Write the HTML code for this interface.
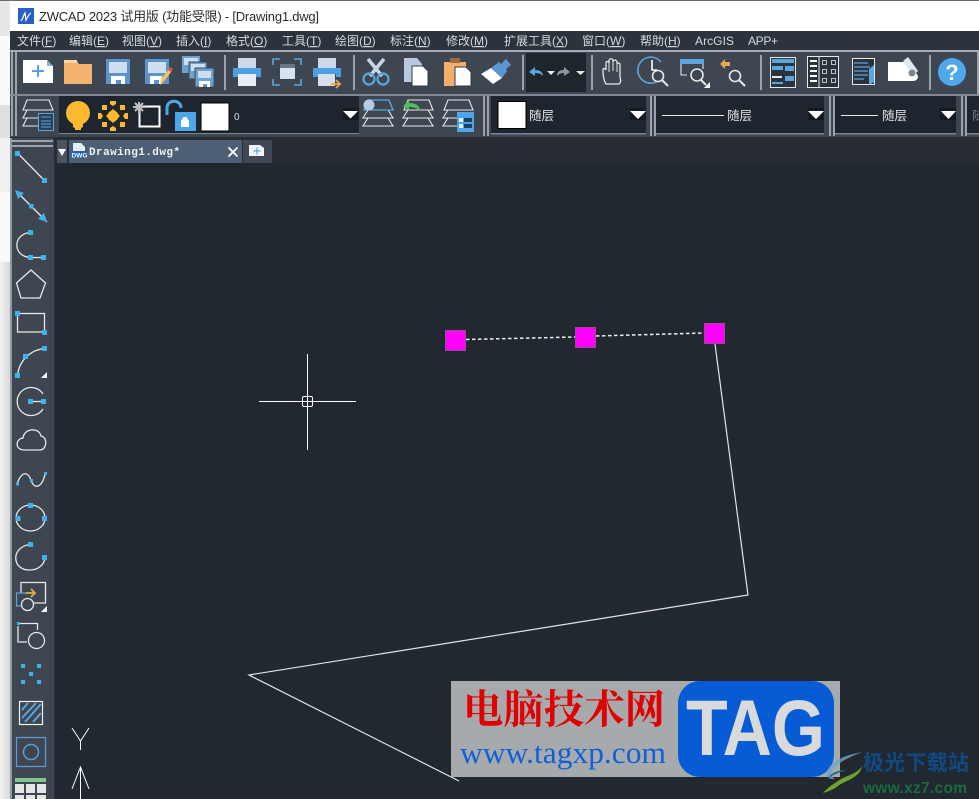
<!DOCTYPE html>
<html><head><meta charset="utf-8"><style>
html,body{margin:0;padding:0;background:#212830;overflow:hidden}
svg{display:block}
text{font-family:"Liberation Sans","Noto Sans CJK SC",sans-serif}
.m{font-size:12px;fill:#d6dade}
.u{text-decoration:underline}
.w{fill:none;stroke:#e8e8e8;stroke-width:1.3}
.b{fill:#3fb4ea}
.l{fill:#e9edf2}
.g{fill:#9aa3ad}
</style></head><body>
<svg width="979" height="799" viewBox="0 0 979 799" xmlns="http://www.w3.org/2000/svg">
<defs>
<linearGradient id="st" x1="0" x2="1" y1="0" y2="0"><stop offset="0" stop-color="#f2f2f2"/><stop offset="1" stop-color="#d8d8d8"/></linearGradient>
</defs>
<rect width="979" height="799" fill="#212830"/>
<!-- left window strip -->
<rect x="0" y="0" width="10" height="36" fill="#e7e7e7"/>
<rect x="0" y="36" width="10" height="69" fill="#fafafa"/>
<rect x="0" y="105" width="10" height="33" fill="#dfdfdf"/>
<rect x="0" y="138" width="10" height="54" fill="#f0f0f0"/>
<rect x="0" y="192" width="10" height="70" fill="#fafafa"/>
<rect x="0" y="262" width="10" height="537" fill="url(#st)"/>
<!-- title -->
<rect x="10" y="0" width="969" height="31" fill="#fff"/>
<rect x="0" y="0" width="979" height="1" fill="#6a6a6a"/>
<rect x="18" y="8" width="16" height="16" fill="#2a5fc6"/>
<path d="M21 21c2-2 2-5 4-8l1 7c1-2 3-6 5-7" fill="none" stroke="#fff" stroke-width="1.2"/>
<text x="39" y="21" font-size="13" fill="#2a2a2a" textLength="280" lengthAdjust="spacing">ZWCAD 2023 试用版 (功能受限) - [Drawing1.dwg]</text>
<!-- menu -->
<rect x="10" y="31" width="969" height="19" fill="#2b333d"/>
<text class="m" x="17" y="45">文件(<tspan class="u">F</tspan>)</text>
<text class="m" x="69" y="45">编辑(<tspan class="u">E</tspan>)</text>
<text class="m" x="122" y="45">视图(<tspan class="u">V</tspan>)</text>
<text class="m" x="176" y="45">插入(<tspan class="u">I</tspan>)</text>
<text class="m" x="226" y="45">格式(<tspan class="u">O</tspan>)</text>
<text class="m" x="282" y="45">工具(<tspan class="u">T</tspan>)</text>
<text class="m" x="335" y="45">绘图(<tspan class="u">D</tspan>)</text>
<text class="m" x="390" y="45">标注(<tspan class="u">N</tspan>)</text>
<text class="m" x="446" y="45">修改(<tspan class="u">M</tspan>)</text>
<text class="m" x="504" y="45">扩展工具(<tspan class="u">X</tspan>)</text>
<text class="m" x="582" y="45">窗口(<tspan class="u">W</tspan>)</text>
<text class="m" x="640" y="45">帮助(<tspan class="u">H</tspan>)</text>
<text class="m" x="695" y="45" textLength="39">ArcGIS</text>
<text class="m" x="748" y="45" textLength="30">APP+</text>
<!-- toolbars bg -->
<rect x="10" y="50" width="969" height="2" fill="#a5adb6"/>
<rect x="10" y="52" width="969" height="42" fill="#3d4651"/>
<rect x="10" y="94" width="969" height="2" fill="#7f8995"/>
<rect x="10" y="96" width="969" height="41" fill="#3d4651"/>
<rect x="10" y="137" width="969" height="26" fill="#272c33"/>
<!-- grips toolbar 1 -->
<rect x="11" y="52" width="2" height="42" class="g"/><rect x="15" y="52" width="2" height="42" class="g"/>
<rect x="224" y="55" width="2" height="35" class="g"/>
<rect x="353" y="55" width="2" height="35" class="g"/>
<rect x="522" y="55" width="2" height="35" class="g"/>
<rect x="591" y="55" width="2" height="35" class="g"/>
<rect x="760" y="55" width="2" height="35" class="g"/>
<rect x="929" y="55" width="2" height="35" class="g"/>
<rect x="977" y="52" width="2" height="42" class="g"/>
<!-- new -->
<path d="M23 60h24l6 6v17H23z" fill="#fff"/><path d="M47 60l6 6h-6z" fill="#7fb1dd"/>
<path d="M38 65v12M32 71h12" stroke="#55a2e0" stroke-width="2"/>
<!-- open -->
<path d="M64 60h12l3 4h13v20H64z" fill="#f5b26e"/><rect x="64" y="60" width="13" height="3" fill="#fbd7a6"/>
<!-- save -->
<rect x="106" y="59" width="24" height="25" fill="#5c93cc"/><rect x="109" y="62" width="18" height="11" fill="#cfdff0"/><path d="M111 84v-8h14v8h-4v-4h-5v4z" fill="#fff"/>
<!-- save as -->
<rect x="145" y="59" width="24" height="25" fill="#5c93cc"/><rect x="148" y="62" width="18" height="11" fill="#cfdff0"/><path d="M150 84v-8h12v8h-3v-4h-5v4z" fill="#fff"/>
<path d="M160 85l1-6 8-10 3 2-8 10z" fill="#f6c35b"/><path d="M168 70l2-3 3 2-2 3z" fill="#e24f4f"/>
<!-- save all -->
<rect x="182" y="56" width="18" height="17" fill="#6ea2d6"/><rect x="184" y="58" width="14" height="7" fill="#cfdff0"/>
<rect x="189" y="62" width="18" height="17" fill="#6ea2d6" stroke="#3d4651"/><rect x="191" y="64" width="14" height="7" fill="#cfdff0"/>
<rect x="195" y="68" width="19" height="19" fill="#6ea2d6" stroke="#3d4651"/><rect x="198" y="71" width="13" height="7" fill="#cfdff0"/><path d="M199 87v-6h11v6h-3v-3h-4v3z" fill="#fff"/>
<!-- print -->
<rect x="238" y="58" width="18" height="10" fill="#cdd8e8"/><path d="M233 68h28v9h-5v-3h-18v3h-5z" fill="#4c9fe3"/><rect x="238" y="74" width="18" height="12" fill="#e8edf5"/>
<!-- preview -->
<path d="M273 65v-6h7M294 59h7v6M301 79v6h-7M280 85h-7v-6" fill="none" stroke="#5ca5e0" stroke-width="1.6"/>
<rect x="280" y="64" width="15" height="15" fill="#d9e2ef"/><rect x="280" y="64" width="15" height="4" fill="#6a7380"/>
<!-- publish -->
<rect x="318" y="58" width="18" height="10" fill="#cdd8e8"/><path d="M313 68h28v9h-5v-3h-18v3h-5z" fill="#4c9fe3"/><rect x="318" y="74" width="17" height="12" fill="#d8dfea"/>
<path d="M331 84h8M336 80l4 4-4 4" fill="none" stroke="#e5ab45" stroke-width="1.8"/>
<!-- cut -->
<path d="M368 59l14 17M384 59l-14 17" stroke="#cbd6e6" stroke-width="3.5"/>
<circle cx="369" cy="79" r="5.5" fill="none" stroke="#5ca5e0" stroke-width="2.2"/><circle cx="383" cy="79" r="5.5" fill="none" stroke="#5ca5e0" stroke-width="2.2"/>
<!-- copy -->
<path d="M404 58h13l5 6v18h-18z" fill="#b8c8de"/>
<path d="M412 66h11l5 5v15h-16z" fill="#fff" stroke="#323a44"/>
<!-- paste -->
<rect x="444" y="62" width="22" height="24" fill="#f4b06a"/><rect x="450" y="58" width="10" height="5" fill="#9f6b38"/>
<path d="M455 67h11l5 5v14h-16z" fill="#fff" stroke="#323a44"/>
<!-- brush -->
<path d="M481 74l10-6 11 10-9 6z" fill="#fff"/><path d="M491 68l8-6 2 2 5-5 5 6-5 4 1 2-5 7z" fill="#5a97d2"/>
<!-- undo/redo -->
<rect x="526" y="53" width="60" height="39" fill="#1f252d"/>
<path d="M529 72l6-5v3c5 0 8 2 8 6-2-2-4-3-8-3v3z" fill="#5ca5e0"/>
<path d="M547 71h8l-4 4z" fill="#e8e8e8"/>
<path d="M570 72l-6-5v3c-5 0-7 2-7 6 2-2 4-3 7-3v3z" fill="#8d959f"/>
<path d="M576 71h9l-4.500 4z" fill="#e8e8e8"/>
<!-- hand -->
<path d="M606 84c-2-3-3-8-3-14 0-2 2-2 3 0v-7c0-2 3-2 3 0v-2c0-3 4-3 4 0v1c0-3 4-2 4 0v2c1-2 3-1 3 1v12c1 4 1 5-1 7z" fill="none" stroke="#e8e8e8" stroke-width="1.3"/>
<path d="M609 62v10M613 60v11M617 62v10" stroke="#e8e8e8" stroke-width="1"/>
<!-- zoom realtime -->
<path d="M661 62a13 13 0 1 0-3 19" fill="none" stroke="#5ca5e0" stroke-width="1.6"/>
<path d="M652 60v10h5" fill="none" stroke="#fff" stroke-width="1.6"/>
<circle cx="658" cy="76" r="5.500" fill="#3d4651" stroke="#e8e8e8" stroke-width="1.600"/><path d="M662 80l6 6" stroke="#e8e8e8" stroke-width="2"/>
<!-- zoom window -->
<rect x="680" y="59" width="24" height="5" fill="#5ca5e0"/>
<path d="M681 64v11h6M703 64v5" fill="none" stroke="#e8e8e8" stroke-width="1.100"/>
<circle cx="697" cy="75" r="6" fill="#3d4651" stroke="#e8e8e8" stroke-width="1.600"/><path d="M701 80l5 5" stroke="#e8e8e8" stroke-width="2"/>
<path d="M710 82v6h-6z" fill="#fff"/>
<!-- zoom previous -->
<path d="M720 64l5-5v3h5v4h-5v3z" fill="#e5ab45"/>
<circle cx="735" cy="76" r="5.500" fill="#3d4651" stroke="#e8e8e8" stroke-width="1.600"/><path d="M739 80l6 6" stroke="#e8e8e8" stroke-width="2"/>
<!-- properties -->
<rect x="770.500" y="57.500" width="25" height="30" fill="#2b333d" stroke="#e8e8e8"/>
<rect x="772" y="59" width="22" height="4" fill="#5ca5e0"/><rect x="772" y="66" width="11" height="4" fill="#5ca5e0"/><rect x="785" y="66" width="9" height="5" fill="#5ca5e0"/>
<rect x="772" y="76" width="10" height="2" fill="#e8e8e8"/><rect x="785" y="76" width="9" height="5" fill="#5ca5e0"/><rect x="772" y="82" width="11" height="2" fill="#5ca5e0"/>
<!-- design center -->
<rect x="807.500" y="56.500" width="31" height="31" fill="#2b333d" stroke="#e8e8e8"/><path d="M819 57v30" stroke="#e8e8e8"/>
<path d="M810 60h7v2h-7zM810 65h7v2h-7zM810 70h7v2h-7zM810 75h7v2h-7zM810 80h7v2h-7z" fill="#fff"/>
<path d="M822.500 60.500h4v4h-4zM831.500 60.500h4v4h-4zM822.500 69.500h4v4h-4zM831.500 69.500h4v4h-4zM822.500 78.500h4v4h-4zM831.500 78.500h4v4h-4z" fill="none" stroke="#b8c0ca"/>
<!-- doc -->
<path d="M852.500 58.500h22v26h-22z" fill="#2b333d" stroke="#e8e8e8"/>
<path d="M854 63h14M854 67h16M854 71h14M854 75h14M854 79h10" stroke="#5ca5e0" stroke-width="1.200"/>
<path d="M869 69l5-4v17l-5 3z" fill="#5ca5e0"/>
<!-- roll -->
<path d="M888 62h21l9 14c0 3-2 5-5 5h-25z" fill="#fff"/>
<path d="M903 61l5-4 10 14-5 5z" fill="#e0e6ee"/><circle cx="912" cy="73" r="3.500" fill="#7d8793"/>
<!-- help -->
<circle cx="952" cy="72" r="14" fill="#4fa8ea"/>
<text x="952" y="80" font-size="22" font-weight="bold" fill="#fff" text-anchor="middle">?</text>
<!-- toolbar 2 grips -->
<rect x="11" y="96" width="2" height="40" class="g"/><rect x="15" y="96" width="2" height="40" class="g"/>
<path d="M27 100h22l4 10H23zM27 110l-4 8h15M27 118l-4 8h15" fill="none" stroke="#e8e8e8" stroke-width="1.100"/>
<rect x="38.500" y="113.500" width="15" height="17" fill="#2b3f55" stroke="#5ca5e0"/>
<path d="M41 117h10M41 121h10M41 124h10M41 127h10" stroke="#5ca5e0"/>
<!-- layer dropdown -->
<rect x="59" y="96" width="300" height="37" fill="#1f252e"/><rect x="59" y="133" width="300" height="1" fill="#7a8490"/>
<circle cx="78" cy="113" r="12" fill="#fcb82e"/><path d="M73 122h10v5l-2 1v2h-6v-2l-2-1z" fill="#fcb82e"/>
<path d="M113 109l7 7-7 7-7-7z" fill="#fcb82e"/><circle cx="113" cy="116" r="5.500" fill="#fcb82e"/>
<path d="M110 101h6v3l-3 2-3-2zM110 131h6v-3l-3-2-3 2zM98 113l3 0 2 3-2 3-3 0zM128 113l-3 0-2 3 2 3 3 0z" fill="#fcb82e"/>
<rect x="102" y="105" width="5" height="5" fill="#fcb82e"/><rect x="120" y="105" width="5" height="5" fill="#fcb82e"/><rect x="102" y="122" width="5" height="5" fill="#fcb82e"/><rect x="120" y="122" width="5" height="5" fill="#fcb82e"/>
<rect x="139.500" y="106.500" width="20" height="20" fill="none" stroke="#fff" stroke-width="2"/>
<path d="M139 102v12M133 107h12M135 103l8 8M143 103l-8 8" stroke="#bfbfbf" stroke-width="2"/>
<path d="M167 115v-7c0-9 14-9 14 0" fill="none" stroke="#4da6ea" stroke-width="3"/>
<rect x="175" y="112" width="21" height="19" fill="#4da6ea"/><circle cx="185" cy="120" r="3" fill="#fff"/><rect x="181" y="120" width="8" height="7" fill="#fff"/>
<rect x="201" y="103" width="28" height="28" fill="#fff" stroke="#000" stroke-width="1"/>
<text x="234" y="120" font-size="10" fill="#d8dce0">0</text>
<rect x="343" y="108" width="16" height="12" fill="#141a21"/><path d="M343 111h15l-7.500 7.500z" fill="#fff"/>
<!-- layer icons -->
<path d="M368 100h21l4 10h-29zM368 110l-5 8h30l-5-8M368 118l-5 8h30l-5-8" fill="none" stroke="#e8e8e8" stroke-width="1.100"/>
<path d="M368 100h21l4 10h-29z" fill="none" stroke="#5ca5e0" stroke-width="1.200"/>
<circle cx="369" cy="105" r="5.500" fill="#b5cbe6"/>
<path d="M408 100h21l4 10h-29zM408 110l-5 8h30l-5-8M408 118l-5 8h30l-5-8" fill="none" stroke="#e8e8e8" stroke-width="1.100"/>
<path d="M403 106l6-6v3c6 0 11 2 11 8-3-3-6-4-11-4v3z" fill="#4dbf62"/>
<path d="M448 100h21l4 10h-29zM448 110l-5 8h16M448 118l-5 8h16" fill="none" stroke="#e8e8e8" stroke-width="1.100"/>
<rect x="457" y="112" width="17" height="20" fill="#4da6ea"/>
<rect x="459" y="118" width="4" height="4" fill="#e8eef5"/><rect x="464" y="118" width="8" height="4" fill="#1f3f60"/><rect x="459" y="124" width="4" height="4" fill="#e8eef5"/><rect x="464" y="124" width="8" height="4" fill="#1f3f60"/>
<!-- property dropdowns -->
<rect x="483" y="96" width="2" height="40" class="g"/><rect x="487" y="96" width="2" height="40" class="g"/>
<rect x="491" y="96" width="155" height="37" fill="#1f252e"/><rect x="491" y="133" width="155" height="1.500" fill="#7a8490"/>
<rect x="498" y="101.500" width="28" height="27" fill="#fff" stroke="#000"/>
<text x="529" y="120" font-size="12.500" fill="#e0e3e6">随层</text>
<rect x="630" y="108" width="16" height="12" fill="#141a21"/><path d="M630 111h16l-8 8z" fill="#fff"/>
<rect x="650" y="96" width="2" height="40" class="g"/><rect x="654" y="96" width="2" height="40" class="g"/>
<rect x="656" y="96" width="168" height="37" fill="#1f252e"/><rect x="656" y="133" width="168" height="1.500" fill="#7a8490"/>
<rect x="662" y="115" width="62" height="1" fill="#e8e8e8"/>
<text x="727" y="120" font-size="12.500" fill="#e0e3e6">随层</text>
<rect x="808" y="108" width="16" height="12" fill="#141a21"/><path d="M808 111h16l-8 8z" fill="#fff"/>
<rect x="829" y="96" width="2" height="40" class="g"/><rect x="833" y="96" width="2" height="40" class="g"/>
<rect x="835" y="96" width="121" height="37" fill="#1f252e"/><rect x="835" y="133" width="121" height="1.500" fill="#7a8490"/>
<rect x="841" y="115" width="37" height="1" fill="#e8e8e8"/>
<text x="882" y="120" font-size="12.500" fill="#e0e3e6">随层</text>
<rect x="940" y="108" width="16" height="12" fill="#141a21"/><path d="M941 111h15l-7.500 8z" fill="#fff"/>
<rect x="961" y="96" width="2" height="40" class="g"/><rect x="965" y="96" width="2" height="40" class="g"/>
<rect x="967" y="96" width="12" height="37" fill="#1f252e"/><rect x="967" y="133" width="12" height="1.500" fill="#7a8490"/>
<text x="972" y="120" font-size="12.500" fill="#6f7781">随</text>
<!-- tabs -->
<rect x="57" y="140" width="10" height="23" fill="#4a5460"/><path d="M58 149h8l-4 7z" fill="#fff"/>
<rect x="69" y="140" width="173" height="23" fill="#4d5f75"/>
<path d="M73 143h8l4 4v5H73z" fill="#e8eef5"/><rect x="71" y="151" width="15" height="7" fill="#1e63b8"/>
<text x="71.500" y="157.500" font-size="6.500" font-weight="bold" fill="#fff">DWG</text>
<text x="89" y="155" font-size="11" font-weight="bold" fill="#f2f2f2" textLength="91" style="font-family:'Liberation Mono',monospace">Drawing1.dwg*</text>
<path d="M228.500 147.500l9 9M237.500 147.500l-9 9" stroke="#fff" stroke-width="1.800"/>
<rect x="243" y="140" width="29" height="23" fill="#3f4853"/>
<path d="M249 145h11l4 3v8h-15z" fill="#f2f4f7"/><path d="M257 147.500v7M253.500 151h7" stroke="#5ca5e0" stroke-width="1.200"/>
<!-- left toolbar -->
<rect x="10" y="138" width="44" height="661" fill="#3d4651"/>
<rect x="10" y="138" width="2" height="661" fill="#8f9aa8"/>
<rect x="11" y="140" width="42" height="2" class="g"/><rect x="11" y="145" width="42" height="2" class="g"/>
<rect x="54" y="163" width="1" height="636" fill="#2c333c"/>
<!-- 1 line -->
<path d="M17.500 153L44.500 180.500" class="w" stroke-width="1.500"/>
<rect x="15" y="151" width="5" height="5" class="b"/><rect x="42" y="178" width="5" height="5" class="b"/>
<!-- 2 ray -->
<path d="M16 191L47 222" class="w" stroke-width="1.500"/>
<path d="M15 190l9 3-6 6z" class="b"/><path d="M47 222l-9-3 6-6z" class="b"/>
<rect x="29" y="204" width="4.500" height="4.500" class="b"/>
<!-- 3 arc -->
<path d="M30 232.500C13 234 12 256 30 257.500H44" class="w" stroke-width="1.500"/>
<rect x="28" y="230" width="5" height="5" class="b"/><rect x="28" y="255" width="5" height="5" class="b"/><rect x="41" y="255" width="5" height="5" class="b"/>
<!-- 4 pentagon -->
<path d="M31 270L45.500 283 40 298H21L16.500 283z" class="w" stroke-width="1.500"/>
<!-- 5 rect -->
<rect x="17.500" y="313.500" width="27" height="18.500" class="w" stroke-width="1.500"/>
<rect x="15" y="311" width="5" height="5" class="b"/><rect x="42" y="330" width="5" height="5" class="b"/>
<!-- 6 arc -->
<path d="M17.500 375.500C19 361 30 350 44.500 348.500" class="w" stroke-width="1.500"/>
<rect x="15" y="373" width="5" height="5" class="b"/><rect x="23" y="354" width="5" height="5" class="b"/><rect x="42" y="346" width="5" height="5" class="b"/>
<path d="M47 372v6h-6z" fill="#fff"/>
<!-- 7 circle -->
<path d="M43 394a14 14 0 1 0 0 15" class="w" stroke-width="1.500"/>
<path d="M30 401.500H44" class="w"/>
<rect x="28" y="399" width="5" height="5" class="b"/><rect x="41" y="399" width="5" height="5" class="b"/>
<!-- 8 cloud -->
<path d="M24 450c-9 0-9-11-1-12 1-10 16-11 18-2 7 1 6 14-1 14z" class="w" stroke-width="1.500"/>
<!-- 9 spline -->
<path d="M17 484C22 470 28 472 31 480 34 490 42 488 45 474" class="w" stroke-width="1.500"/>
<rect x="16" y="482.500" width="3" height="3" class="b"/><rect x="30" y="479" width="3" height="3" class="b"/><rect x="44" y="472" width="3" height="3" class="b"/>
<!-- 10 ellipse -->
<ellipse cx="30.500" cy="518" rx="14.500" ry="13" class="w" stroke-width="1.500"/>
<rect x="28" y="503" width="5" height="5" class="b"/><rect x="15.500" y="516" width="5" height="5" class="b"/><rect x="42" y="516" width="5" height="5" class="b"/>
<!-- 11 ellipse arc -->
<path d="M30 544.500C10 547 12 571 30 570 38 570 44 565 45 558" class="w" stroke-width="1.500"/>
<rect x="28" y="542" width="5" height="5" class="b"/><rect x="42" y="555" width="5" height="5" class="b"/>
<!-- 12 block -->
<path d="M21 593v-10.500h24.500v20.500H34" class="w"/>
<path d="M26 593h-9.500v13h5" fill="none" stroke="#5ca5e0" stroke-width="1.200"/>
<circle cx="27.500" cy="604.500" r="6" class="w" stroke-width="1.500"/>
<path d="M26 593h9M31 589l4 4-4 4" fill="none" stroke="#e5ab45" stroke-width="1.800"/>
<path d="M47 606v6h-6z" fill="#fff"/>
<!-- 13 -->
<path d="M20 623.500H37.500V630M18 626V642H27" class="w" stroke-width="1.100"/>
<rect x="17" y="622" width="3" height="3" class="b"/>
<circle cx="36.500" cy="640.500" r="8" class="w" stroke-width="1.500"/>
<!-- 14 points -->
<rect x="21" y="664" width="4" height="4" class="b"/><rect x="37" y="664" width="4" height="4" class="b"/><rect x="29" y="672" width="4" height="4" class="b"/><rect x="21" y="680" width="4" height="4" class="b"/><rect x="37" y="680" width="4" height="4" class="b"/>
<!-- 15 hatch -->
<rect x="19.500" y="701.500" width="23" height="23" fill="none" stroke="#f0f0f0" stroke-width="1.200"/>
<path d="M22 710l6-7M22 718l14-15M25 722l16-18M33 722l8-9" stroke="#5ca5e0" stroke-width="2"/>
<!-- 16 region -->
<rect x="16.500" y="737.500" width="29" height="29" fill="none" stroke="#5a9ad5" stroke-width="1.300"/>
<circle cx="31" cy="752" r="7.500" fill="none" stroke="#5a9ad5" stroke-width="1.500"/>
<!-- 17 table -->
<rect x="15" y="778" width="31" height="4" fill="#7fc88c"/>
<rect x="15" y="784" width="9" height="9" fill="#e6e6e6"/><rect x="26" y="784" width="9" height="9" fill="#e6e6e6"/><rect x="37" y="784" width="9" height="9" fill="#e6e6e6"/>
<rect x="15" y="795" width="9" height="4" fill="#e6e6e6"/><rect x="26" y="795" width="9" height="4" fill="#e6e6e6"/><rect x="37" y="795" width="9" height="4" fill="#e6e6e6"/>
<!-- UCS -->
<path d="M72 728l8.500 13L89 728M80.500 741v9M72 789l8.500-22L89 789M80.500 767v32" fill="none" stroke="#fff" stroke-width="1"/>
<!-- crosshair -->
<path d="M307.500 354v42M307.500 407v43M259 401.500h43M313 401.500h43" stroke="#fff" stroke-width="1"/>
<rect x="302.500" y="396.500" width="10" height="10" rx="1.500" fill="none" stroke="#fff"/>
<path d="M307.500 396v11M302 401.500h11" stroke="#fff" stroke-width="1"/>
<!-- drawing -->
<path d="M715 344L748 595 249 675 459 781" fill="none" stroke="#e4e4e4" stroke-width="1.200"/>
<path d="M466 339.500L575 337M596 336L704 333" fill="none" stroke="#f0f0f0" stroke-width="1.500" stroke-dasharray="3.500 2.500"/>
<rect x="445.500" y="330.500" width="20" height="20" fill="#ff00ff" stroke="#9a4a9a"/>
<rect x="575.500" y="327.500" width="20" height="20" fill="#ff00ff" stroke="#9a4a9a"/>
<rect x="704.500" y="323.500" width="20" height="20" fill="#ff00ff" stroke="#9a4a9a"/>
<!-- watermark -->
<rect x="451" y="681" width="389" height="96" fill="#a7aaad"/>
<rect x="678" y="681" width="156" height="96" rx="22" fill="#075cd6"/>
<text x="463" y="723" font-size="40" font-weight="bold" fill="#e00000" textLength="202" lengthAdjust="spacingAndGlyphs" style="font-family:'Noto Serif CJK SC','Noto Sans CJK SC',serif">电脑技术网</text>
<text x="460" y="763" font-size="31" fill="#0f60d8" textLength="206" lengthAdjust="spacingAndGlyphs" style="font-family:'Liberation Serif',serif">www.tagxp.com</text>
<text x="686" y="755" font-size="79" font-weight="bold" fill="#d8dadc" textLength="139" lengthAdjust="spacingAndGlyphs">TAG</text>
<!-- xz7 logo -->
<path d="M862 752c-16 3-30 8-35 19-2 5 2 9 8 8-6-3-4-9 1-13 7-6 16-10 26-14z" fill="#6fa4c8" opacity=".8"/>
<path d="M862 766c-2 12-16 14-24 20-4 3-8 5-15 7 5-6 12-10 18-14 8-4 17-6 21-13z" fill="#6ea32a"/>
<path d="M846 770c-8 0-16 3-18 9 4-4 10-6 18-9z" fill="#1f6f7c"/>
<text x="863" y="770" font-size="21" font-weight="bold" fill="#0f4a85" textLength="106">极光下载站</text>
<text x="863" y="793" font-size="15.500" font-weight="bold" fill="#1a6b40" textLength="104">www.xz7.com</text>
</svg>
</body></html>
